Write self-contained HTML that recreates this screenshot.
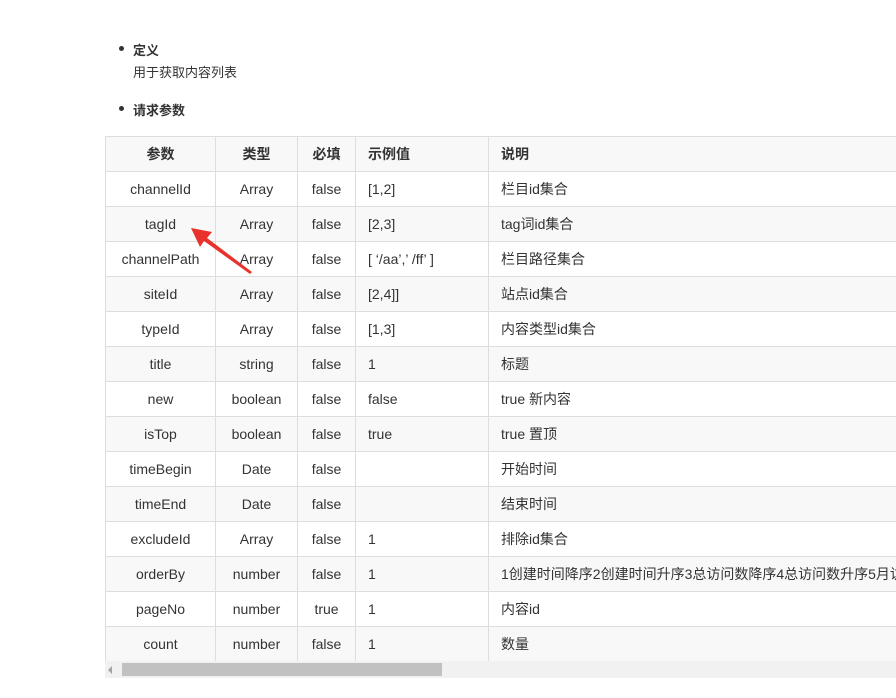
<!DOCTYPE html>
<html><head><meta charset="utf-8"><style>
html,body{margin:0;width:896px;height:698px;overflow:hidden}
body{background:#fff;font-family:"Liberation Sans","Noto Sans CJK SC",sans-serif;color:#333;font-size:13px;position:relative}
.b{position:absolute;left:119px;width:5px;height:5px;border-radius:50%;background:#333}
.t{position:absolute;left:133px}
.wrap{position:absolute;left:105px;top:136px;width:791px;height:525px;overflow:hidden}
table{border-collapse:collapse;table-layout:fixed;width:900px}
td,th{border:1px solid #ddd;height:34px;padding:0 12px;font-size:14px;white-space:nowrap;overflow:hidden}
th{font-weight:bold;background:#f8f8f8}
tr:nth-child(odd) td{background:#f8f8f8}
td.c{text-align:center}
th.l{text-align:left}
.sb{position:absolute;left:105px;top:661px;width:791px;height:17px;background:#f1f1f1}
.th{position:absolute;left:122px;top:663px;width:320px;height:13px;background:#c1c1c1}
</style></head><body>
<div class="b" style="top:46px"></div><div class="t" style="top:40px;font-weight:bold">定义</div>
<div class="t" style="top:62px">用于获取内容列表</div>
<div class="b" style="top:106px"></div><div class="t" style="top:100px;font-weight:bold">请求参数</div>
<div class="wrap"><table>
<colgroup><col style="width:110px"><col style="width:82px"><col style="width:58px"><col style="width:133px"><col style="width:517px"></colgroup>
<tr><th>参数</th><th>类型</th><th>必填</th><th class="l">示例值</th><th class="l">说明</th></tr>
<tr><td class="c">channelId</td><td class="c">Array</td><td class="c">false</td><td>[1,2]</td><td>栏目id集合</td></tr>
<tr><td class="c">tagId</td><td class="c">Array</td><td class="c">false</td><td>[2,3]</td><td>tag词id集合</td></tr>
<tr><td class="c">channelPath</td><td class="c">Array</td><td class="c">false</td><td>[ ‘/aa’,’ /ff’ ]</td><td>栏目路径集合</td></tr>
<tr><td class="c">siteId</td><td class="c">Array</td><td class="c">false</td><td>[2,4]]</td><td>站点id集合</td></tr>
<tr><td class="c">typeId</td><td class="c">Array</td><td class="c">false</td><td>[1,3]</td><td>内容类型id集合</td></tr>
<tr><td class="c">title</td><td class="c">string</td><td class="c">false</td><td>1</td><td>标题</td></tr>
<tr><td class="c">new</td><td class="c">boolean</td><td class="c">false</td><td>false</td><td>true 新内容</td></tr>
<tr><td class="c">isTop</td><td class="c">boolean</td><td class="c">false</td><td>true</td><td>true 置顶</td></tr>
<tr><td class="c">timeBegin</td><td class="c">Date</td><td class="c">false</td><td></td><td>开始时间</td></tr>
<tr><td class="c">timeEnd</td><td class="c">Date</td><td class="c">false</td><td></td><td>结束时间</td></tr>
<tr><td class="c">excludeId</td><td class="c">Array</td><td class="c">false</td><td>1</td><td>排除id集合</td></tr>
<tr><td class="c">orderBy</td><td class="c">number</td><td class="c">false</td><td>1</td><td>1创建时间降序2创建时间升序3总访问数降序4总访问数升序5月访问数降序</td></tr>
<tr><td class="c">pageNo</td><td class="c">number</td><td class="c">true</td><td>1</td><td>内容id</td></tr>
<tr><td class="c">count</td><td class="c">number</td><td class="c">false</td><td>1</td><td>数量</td></tr>
</table></div>
<div class="sb"></div><div class="th"></div>
<div style="position:absolute;left:108px;top:666px;width:0;height:0;border-right:4px solid #a3a3a3;border-top:4px solid transparent;border-bottom:4px solid transparent"></div>
<svg style="position:absolute;left:0;top:0" width="896" height="698"><polygon points="191,228 212,232 207,238 252,272 250,274 204,241 200,247" fill="#e8322b"/></svg>
</body></html>
